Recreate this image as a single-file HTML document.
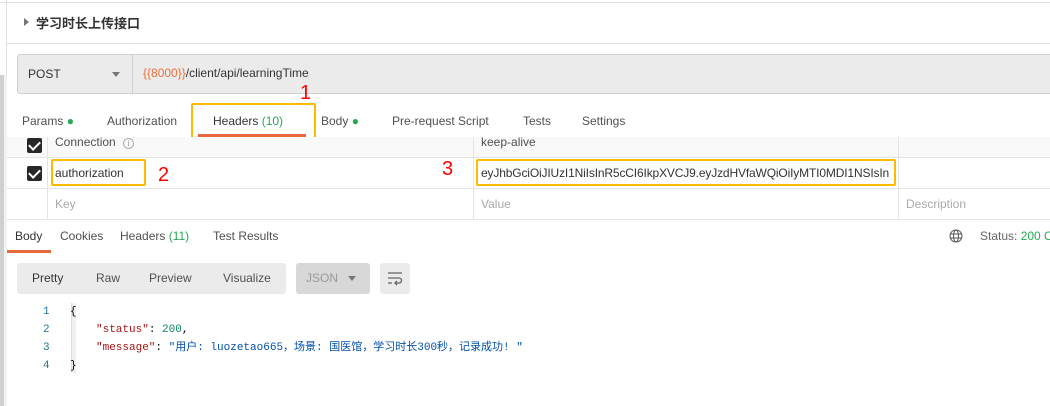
<!DOCTYPE html>
<html><head><meta charset="utf-8"><style>
*{margin:0;padding:0;box-sizing:border-box}
body{width:1050px;height:406px;overflow:hidden;background:#fff;font-family:"Liberation Sans","Noto Sans CJK SC",sans-serif;font-size:12px;color:#505050;position:relative}
.a{position:absolute;white-space:nowrap}
.mono{font-family:"Liberation Mono","Noto Sans CJK SC",monospace;font-size:11px}
.cb{position:absolute;width:15px;height:15px;background:#282828;border-radius:2px}
.cb:after{content:"";position:absolute;left:4px;top:1px;width:5px;height:9px;border:solid #fff;border-width:0 2px 2px 0;transform:rotate(45deg)}
</style></head><body>
<div class="a" style="left:0;top:0;width:1050px;height:3px;border-bottom:1px solid #e0e0e0"></div>
<div class="a" style="left:6px;top:0;width:1px;height:75px;background:#e0e0e0"></div>
<div class="a" style="left:0;top:75px;width:4px;height:331px;background:#d0d0d0"></div>
<div class="a" style="left:4px;top:75px;width:3px;height:331px;background:#f2f2f2"></div>
<div class="a" style="left:24px;top:18px;width:0;height:0;border-left:5px solid #777;border-top:4px solid transparent;border-bottom:4px solid transparent"></div>
<div class="a" style="left:36px;top:13px;font-size:13px;color:#333;font-weight:bold">学习时长上传接口</div>
<div class="a" style="left:7px;top:43px;width:1043px;height:1px;background:#e0e0e0"></div>
<div class="a" style="left:17px;top:54px;width:1040px;height:40px;background:#ebebeb;border:1px solid #d0d0d0;border-radius:3px"></div>
<div class="a" style="left:132px;top:55px;width:1px;height:38px;background:#d0d0d0"></div>
<div class="a" style="left:28px;top:67px;font-size:12px;color:#333">POST</div>
<div class="a" style="left:112px;top:72px;border-top:5px solid #777;border-left:4px solid transparent;border-right:4px solid transparent"></div>
<div class="a" style="left:143px;top:66px;font-size:12px;color:#333"><span style="color:#e8713e">{{8000}}</span>/client/api/learningTime</div>
<div class="a" style="left:22px;top:114px">Params <span style="color:#26a853">●</span></div>
<div class="a" style="left:107px;top:114px">Authorization</div>
<div class="a" style="left:213px;top:114px;color:#333">Headers <span style="color:#26a853">(10)</span></div>
<div class="a" style="left:321px;top:114px">Body <span style="color:#26a853">●</span></div>
<div class="a" style="left:392px;top:114px">Pre-request Script</div>
<div class="a" style="left:523px;top:114px">Tests</div>
<div class="a" style="left:582px;top:114px">Settings</div>
<div class="a" style="left:198px;top:134px;width:108px;height:3px;background:#e8693b"></div>
<div class="a" style="left:191px;top:103px;width:125px;height:38px;border:2px solid #fdbb00;border-radius:2px"></div>
<div class="a" style="left:300px;top:82px;font-size:20px;color:#f00">1</div>
<div class="a" style="left:7px;top:137px;width:1043px;height:20px;background:#f9f9f9"></div>
<div class="a" style="left:7px;top:157px;width:1043px;height:1px;background:#e4e4e4"></div>
<div class="a" style="left:7px;top:188px;width:1043px;height:1px;background:#e4e4e4"></div>
<div class="a" style="left:7px;top:219px;width:1043px;height:1px;background:#e4e4e4"></div>
<div class="a" style="left:47px;top:137px;width:1px;height:82px;background:#e4e4e4"></div>
<div class="a" style="left:473px;top:137px;width:1px;height:82px;background:#e4e4e4"></div>
<div class="a" style="left:898px;top:137px;width:1px;height:82px;background:#e4e4e4"></div>
<div class="cb" style="left:27px;top:138px"></div>
<div class="cb" style="left:27px;top:166px"></div>
<div class="a" style="left:55px;top:135px">Connection <span style="display:inline-block;width:11px;height:11px;border:1px solid #aaa;border-radius:50%;font-size:8px;text-align:center;line-height:10px;color:#999;margin-left:4px">i</span></div>
<div class="a" style="left:481px;top:135px">keep-alive</div>
<div class="a" style="left:55px;top:166px;color:#333">authorization</div>
<div class="a" style="left:51px;top:159px;width:95px;height:27px;border:2px solid #fdbb00;border-radius:2px"></div>
<div class="a" style="left:158px;top:164px;font-size:20px;color:#f00">2</div>
<div class="a" style="left:442px;top:158px;font-size:20px;color:#f00">3</div>
<div class="a" style="left:481px;top:166px;color:#333;font-size:12px;letter-spacing:-0.15px">eyJhbGciOiJIUzI1NiIsInR5cCI6IkpXVCJ9.eyJzdHVfaWQiOiIyMTI0MDI1NSIsIn</div>
<div class="a" style="left:476px;top:159px;width:420px;height:27px;border:2px solid #fdbb00;border-radius:2px"></div>
<div class="a" style="left:55px;top:197px;color:#aaa">Key</div>
<div class="a" style="left:481px;top:197px;color:#aaa">Value</div>
<div class="a" style="left:906px;top:197px;color:#aaa">Description</div>
<div class="a" style="left:15px;top:229px;color:#333">Body</div>
<div class="a" style="left:60px;top:229px">Cookies</div>
<div class="a" style="left:120px;top:229px">Headers <span style="color:#26a853">(11)</span></div>
<div class="a" style="left:213px;top:229px">Test Results</div>
<div class="a" style="left:7px;top:250px;width:44px;height:3px;background:#e8693b"></div>
<svg class="a" style="left:949px;top:229px" width="14" height="14" viewBox="0 0 14 14" fill="none" stroke="#555" stroke-width="1"><circle cx="7" cy="7" r="6"/><ellipse cx="7" cy="7" rx="2.5" ry="6"/><line x1="1" y1="5" x2="13" y2="5"/><line x1="1" y1="9" x2="13" y2="9"/></svg>
<div class="a" style="left:980px;top:229px;color:#666">Status: <span style="color:#26a853">200 OK</span></div>
<div class="a" style="left:17px;top:263px;width:269px;height:31px;background:#ebebeb;border-radius:3px"></div>
<div class="a" style="left:32px;top:271px;color:#333">Pretty</div>
<div class="a" style="left:96px;top:271px">Raw</div>
<div class="a" style="left:149px;top:271px">Preview</div>
<div class="a" style="left:223px;top:271px">Visualize</div>
<div class="a" style="left:296px;top:263px;width:74px;height:31px;background:#d8d8d8;border-radius:3px"></div>
<div class="a" style="left:306px;top:271px;color:#999">JSON</div>
<div class="a" style="left:348px;top:276px;border-top:5px solid #777;border-left:4px solid transparent;border-right:4px solid transparent"></div>
<div class="a" style="left:380px;top:263px;width:30px;height:31px;background:#ebebeb;border-radius:3px"></div>
<svg class="a" style="left:387px;top:270px" width="16" height="16" viewBox="0 0 16 16" fill="none" stroke="#666" stroke-width="1.3"><line x1="1" y1="3" x2="15" y2="3"/><path d="M1 8h11a2.5 2.5 0 0 1 0 5H8"/><path d="M10 11l-2 2 2 2"/><line x1="1" y1="13" x2="5" y2="13"/></svg>
<div class="a" style="left:71px;top:303px;width:5px;height:70px;background:#f0f0f0;border-left:1px solid #ddd"></div>
<div class="a mono" style="left:43px;top:303px;color:#237893;line-height:18px">1<br>2<br>3<br>4</div>
<div class="a mono" style="left:70px;top:303px;line-height:18px;color:#000">{<br><span style="margin-left:26px;color:#a31515">"status"</span>: <span style="color:#098658">200</span>,<br><span style="margin-left:26px;color:#a31515">"message"</span>: <span style="color:#0451a5">"用户: luozetao665，场景: 国医馆，学习时长300秒，记录成功! "</span><br>}</div>
</body></html>
